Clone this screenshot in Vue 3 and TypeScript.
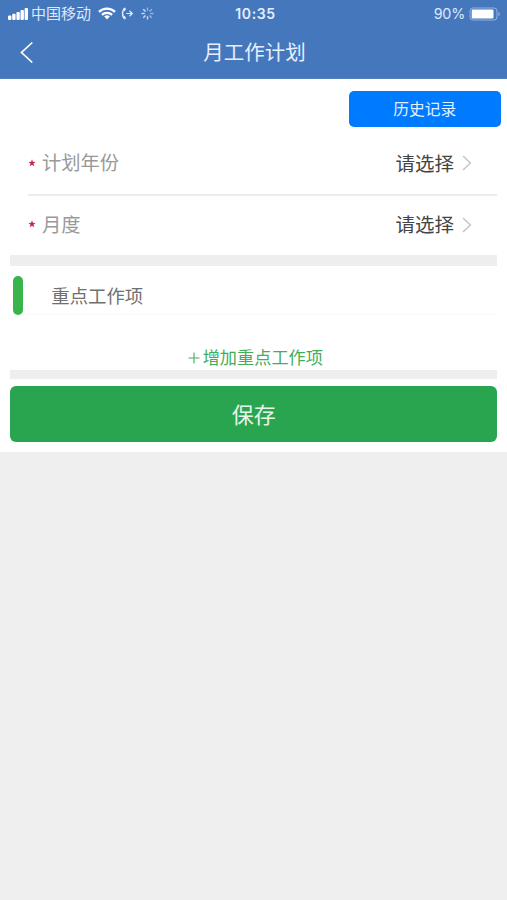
<script setup lang="ts">
interface Field {
  label: string
  value: string
}

const fields: Field[] = [
  { label: '计划年份', value: '请选择' },
  { label: '月度', value: '请选择' },
]

const spokes: number[] = [0, 45, 90, 135, 180, 225, 270, 315]
</script>

<template>
  <div class="screen">
    <header class="top">
      <div class="status">
        <div class="side">
          <svg class="signal" width="20" height="12" viewBox="0 0 20 12" fill="currentColor">
            <rect x="0" y="7.5" width="3.4" height="4.5" rx="1" />
            <rect x="4.2" y="5.8" width="3.4" height="6.2" rx="1" />
            <rect x="8.4" y="4" width="3.4" height="8" rx="1" />
            <rect x="12.5" y="2" width="3.4" height="10" rx="1" />
            <rect x="16.6" y="0" width="3.4" height="12" rx="1" />
          </svg>
          <span class="carrier">中国移动</span>
          <svg class="wifi" width="18" height="13" viewBox="0 0 18 13" fill="none" stroke="currentColor" stroke-width="2.3">
            <path d="M1 4.9a11.3 11.3 0 0 1 16 0" />
            <path d="M3.9 7.9a7.2 7.2 0 0 1 10.2 0" />
            <path d="M9 12.4 6.2 9.6a4 4 0 0 1 5.6 0z" fill="currentColor" stroke="none" />
          </svg>
          <svg class="forward" width="13" height="13" viewBox="0 0 13 13" fill="none" stroke="currentColor" stroke-width="1.4">
            <path d="M4.4 1C.6 3 .6 10 4.4 12" />
            <path d="M4 1.4 2.8 3.6M4 11.6 2.8 9.4" stroke-width="2.2" />
            <path d="M5.3 6.5h6M8.5 3.8l2.8 2.7-2.8 2.7" stroke-width="1.2" />
          </svg>
          <svg class="spinner" width="13" height="13" viewBox="-6.5 -6.5 13 13" stroke="currentColor" stroke-width="1.4">
            <line
              v-for="(angle, i) in spokes"
              :key="angle"
              x1="0"
              y1="-2.8"
              x2="0"
              y2="-6"
              :opacity="i > 3 ? 0.9 : 0.55"
              :transform="`rotate(${angle})`"
            />
          </svg>
        </div>
        <span class="clock">10:35</span>
        <div class="side right">
          <span class="percent">90%</span>
          <svg width="32" height="14" viewBox="0 0 32 14">
            <rect x="1" y="1" width="27" height="12" rx="3" fill="none" stroke="#93b4e1" />
            <rect x="2.7" y="2.5" width="21.8" height="9" rx="1.2" fill="#fff" />
            <path d="M29.4 4.7c1.8.8 1.8 3.8 0 4.6z" fill="#93b4e1" />
          </svg>
        </div>
      </div>
      <nav class="nav">
        <svg class="back" width="14" height="23" viewBox="0 0 14 23" fill="none" stroke="currentColor" stroke-width="1.7">
          <path d="M12.3 1.5 1.5 11.5l10.8 10" />
        </svg>
        <h1>月工作计划</h1>
      </nav>
    </header>

    <main class="content">
      <div class="toolbar">
        <button class="history">历史记录</button>
      </div>
      <div class="fields">
        <div v-for="field in fields" :key="field.label" class="field">
          <svg class="star" width="8" height="8" viewBox="0 0 8 8" fill="#cb2548">
            <path d="m4 .3.9 2.5 2.7.1-2.1 1.7.8 2.7L4 5.8 1.7 7.3l.8-2.7L.4 2.9l2.7-.1z" />
          </svg>
          <span class="label">{{ field.label }}</span>
          <span class="value">{{ field.value }}</span>
          <svg class="chevron" width="10" height="16" viewBox="0 0 10 16" fill="none" stroke="#c3c3c3" stroke-width="1.4">
            <path d="m1 1 7.4 7L1 15" />
          </svg>
        </div>
      </div>
      <div class="divider"></div>
      <section class="section">
        <span class="marker"></span>
        <h2>重点工作项</h2>
      </section>
      <button class="add">
        <svg width="12" height="12" viewBox="0 0 12 12" stroke="currentColor" stroke-width="1.1">
          <path d="M6 .5v11M.5 6h11" />
        </svg>
        <span>增加重点工作项</span>
      </button>
      <div class="divider thin"></div>
      <button class="save">保存</button>
    </main>
  </div>
</template>

<style>
body {
  background: #efefef;
}
</style>

<style scoped>
.screen {
  width: 100%;
  min-height: 900px;
  background: #efefef;
  font-family: Inter, "Noto Sans CJK SC", sans-serif;
}
.screen * {
  box-sizing: border-box;
}
button {
  border: 0;
  padding: 0;
  font-family: inherit;
  display: block;
}
h1,
h2 {
  margin: 0;
  font-weight: 400;
}
.top {
  height: 79px;
  background: #4577bc;
  border-bottom: 1px solid #527fb9;
  color: #fff;
}
.status {
  height: 27px;
  display: grid;
  grid-template-columns: 1fr auto 1fr;
  align-items: center;
  padding: 0 6px 0 8px;
}
.side {
  display: flex;
  align-items: center;
}
.carrier {
  margin-left: 3px;
  font-size: 15px;
  line-height: 20px;
  color: #dce9fc;
}
.wifi {
  margin-left: 7px;
}
.forward {
  margin-left: 5px;
  color: #e1edff;
}
.spinner {
  margin-left: 7px;
  color: #dce9fc;
}
.clock {
  padding-left: 2px;
  font-size: 14px;
  font-weight: 600;
  letter-spacing: 0.6px;
  color: #e4eefe;
}
.right {
  justify-content: flex-end;
}
.percent {
  margin-right: 4px;
  font-size: 14.3px;
  letter-spacing: -0.2px;
  color: #dce9fc;
}
.nav {
  height: 51px;
  display: grid;
  grid-template-columns: 34px 1fr 33px;
  align-items: center;
}
.back {
  margin-left: 20px;
}
h1 {
  padding-left: 1px;
  font-size: 20.5px;
  line-height: 30px;
  color: #e4eefe;
  text-align: center;
}
.content {
  height: 373px;
  padding: 12px 9.7px 0 10.3px;
  background: #fff;
}
.toolbar {
  display: flex;
  justify-content: flex-end;
  margin-right: -3.7px;
}
.history {
  width: 152.5px;
  height: 36px;
  padding-bottom: 2px;
  border-radius: 5px;
  background: #007aff;
  color: #e2f1ff;
  font-size: 15.8px;
}
.fields {
  padding: 6px 0 0 18px;
}
.field {
  height: 59px;
  display: flex;
  align-items: center;
  padding: 0 25.3px 4px 0;
}
.field:first-child {
  height: 63px;
  padding-bottom: 3px;
  border-bottom: 2px solid #ececec;
}
.star {
  margin-top: 1px;
}
.label {
  margin-left: 5.7px;
  font-size: 19.3px;
  color: #999;
}
.value {
  margin-left: auto;
  font-size: 19.5px;
  color: #444;
}
.chevron {
  margin: 2px 0 0 8px;
}
.divider {
  height: 11px;
  background: #eee;
}
.section {
  height: 50px;
  display: flex;
  align-items: flex-end;
  padding-left: 3px;
}
.marker {
  width: 10px;
  height: 39px;
  margin-bottom: 1px;
  border-radius: 5px;
  background: #39b44a;
}
h2 {
  flex: 1;
  height: 49px;
  padding: 11px 0 0 28px;
  margin-bottom: 1px;
  border-bottom: 1px solid #fafafa;
  font-size: 18.4px;
  line-height: 38px;
  color: #707070;
}
.add {
  width: 100%;
  height: 54px;
  padding: 29px 0 0 3px;
  background: none;
  display: flex;
  align-items: center;
  justify-content: center;
  gap: 3px;
  font-size: 17.2px;
  line-height: 26px;
  color: #45ad58;
}
.thin {
  height: 9px;
}
.save {
  width: 100%;
  height: 56px;
  margin-top: 7px;
  padding-bottom: 2px;
  border-radius: 6px;
  background: #28a54e;
  color: #e5f6e9;
  font-size: 22px;
}
</style>
